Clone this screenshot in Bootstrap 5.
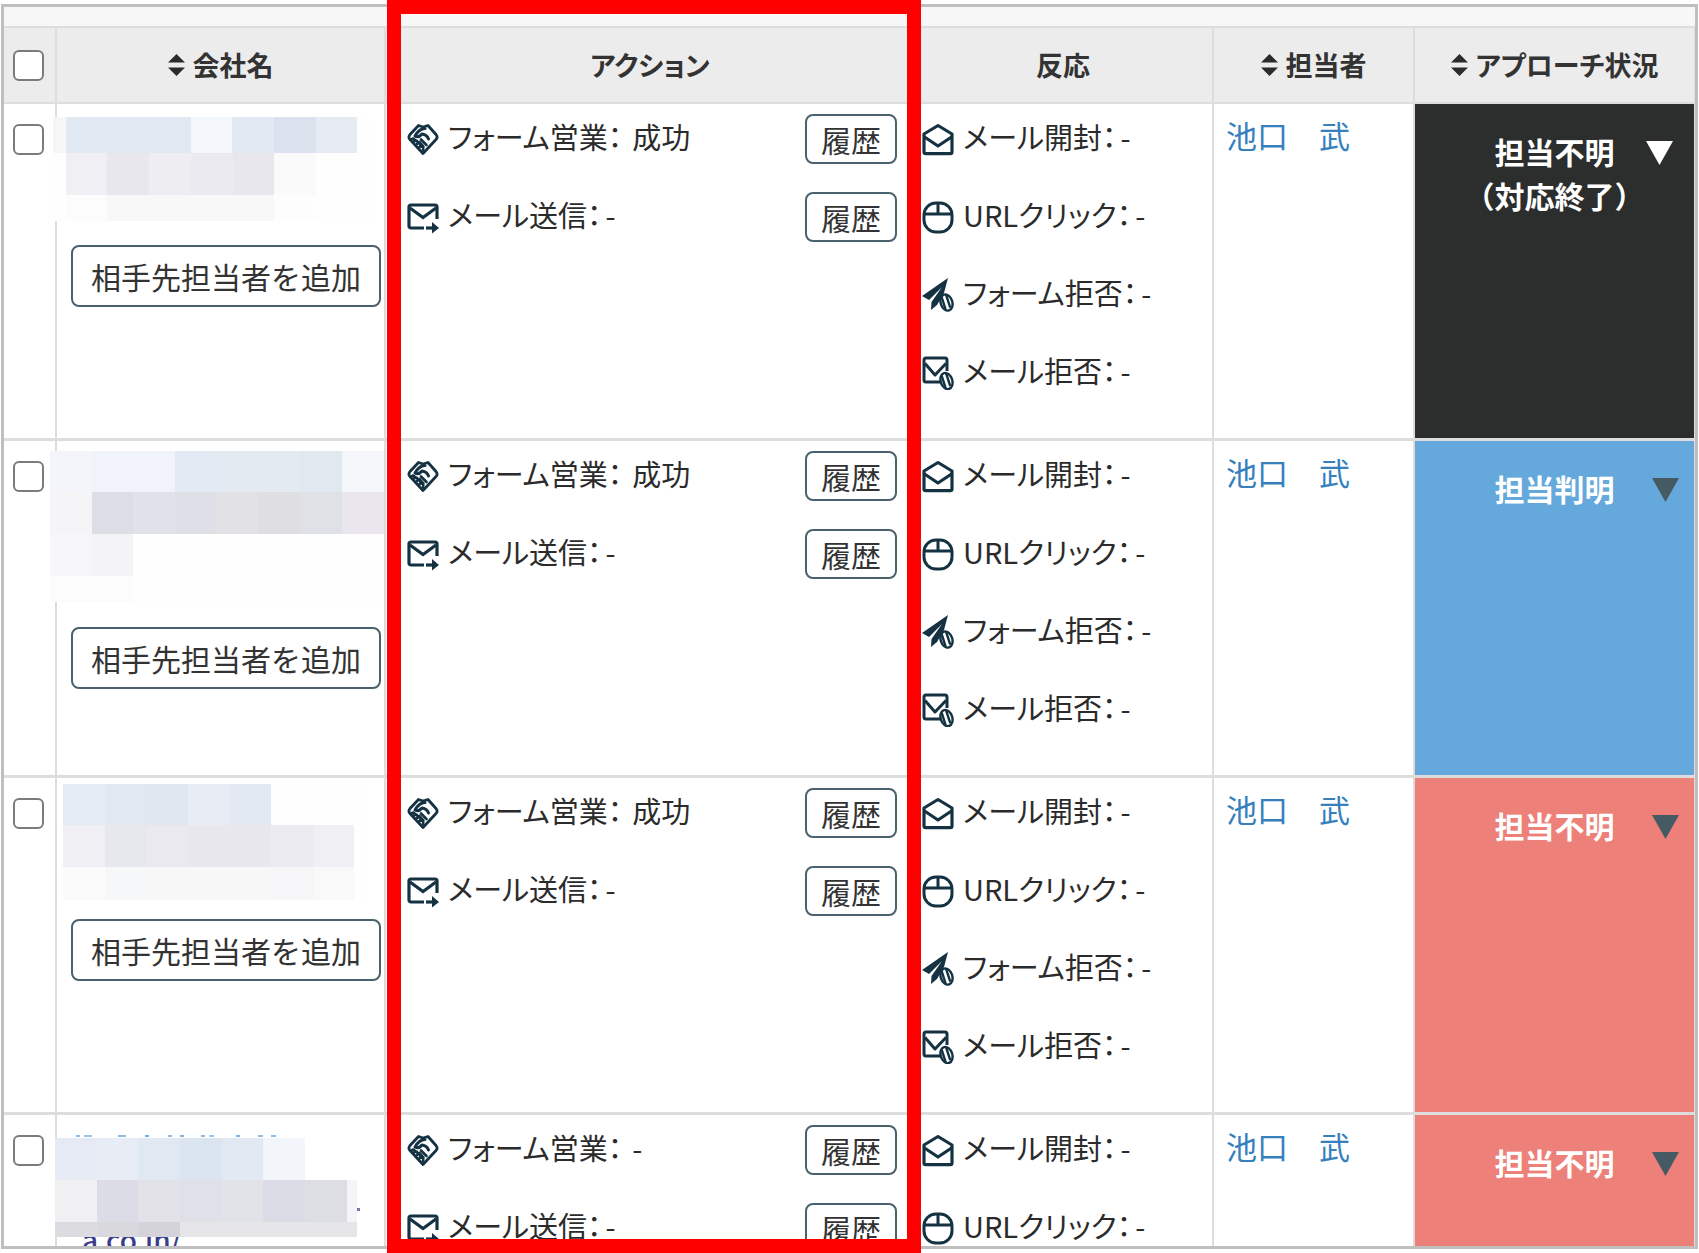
<!DOCTYPE html>
<html lang="ja">
<head>
<meta charset="utf-8">
<meta name="viewport" content="width=device-width, initial-scale=1">
<title>営業リスト</title>
<link href="https://cdn.jsdelivr.net/npm/bootstrap@5.3.0/dist/css/bootstrap.min.css" rel="stylesheet">
<style>
  body { font-family: "Noto Sans CJK JP", sans-serif; font-feature-settings: "palt"; font-size: 29px; line-height: 46px; color: #2b2b2b; overflow: hidden; }
  .stage { height: 100vh; padding: 4px 1px; }
  .list-panel { height: 100%; border: 3px solid #bfbfbf; padding-bottom: 2px; }
  .top-strip { height: 19px; background: #f7f7f7; }
  .sales-list { table-layout: fixed; border-collapse: separate; border-spacing: 0; }
  .sales-list th, .sales-list td { padding: 0; vertical-align: top; border-right: 2px solid #ddd; border-bottom: 3px solid #ddd; }
  .sales-list th { height: 78px; vertical-align: middle; text-align: center; background: #ececec; border-top: 2px solid #ddd; border-bottom-width: 2px; font-size: 27px; line-height: 40px; font-weight: 700; color: #333; }
  .sales-list th:last-child, .sales-list td:last-child { border-right: 1px solid #ddd; }
  .c-check { width: 53px; } .c-company { width: 329px; } .c-react { width: 300px; } .c-staff { width: 201px; } .c-state { width: 280px; }
  .pick { appearance: none; display: block; width: 31px; height: 31px; margin: 20px 0 0 9px; border: 2px solid #7b7b7b; border-radius: 6px; background: #fff; }
  th .pick { margin-top: 0; }
  .sort { width: 17px; height: 22px; fill: #2b2b2b; }
  .mask { display: block; position: relative; z-index: 1; width: 334px; margin-left: -7px; }
  .line-btn { border: 2px solid #4a626d; border-radius: 8px; background: #fff; color: #333; padding: 0; font-size: 30px; }
  .add-btn { width: 310px; height: 62px; margin-left: 14px; line-height: 58px; }
  .log-btn { width: 92px; height: 50px; line-height: 46px; }
  .acts { padding: 10px 17px 40px 21px; gap: 28px; }
  .reacts { padding: 10px 9px 40px 8px; gap: 28px; }
  .entry { height: 50px; gap: 9px; white-space: nowrap; }
  .entry .words { padding-bottom: 6px; }
  .entry .val { margin-left: 4px; }
  .entry .val-form { margin-left: 10px; }
  .ico { width: 32px; height: 34px; flex: none; color: #153243; }
  .staff { display: inline-block; padding: 8px 12px; font-size: 31px; color: #3580bd; text-decoration: none; }
  .state { display: block; width: 100%; padding: 25px 0 0; border: 0; background: none; color: #fff; font-size: 30px; font-weight: 700; line-height: 44px; position: relative; }
  .state .tri { position: absolute; top: 37px; right: 15px; width: 27px; height: 24px; fill: #465a64; }
  .st-end { background: #2c2e2d; } .st-end .tri { right: 21px; fill: #fff; }
  .st-known { background: #64a8dc; } .st-unknown { background: #ed8078; }
  .focus-frame { position: absolute; top: 0; bottom: 0; left: 387px; right: 778px; border: 14px solid #f00; pointer-events: none; z-index: 3; }
</style>
</head>
<body>
<svg class="d-none" xmlns="http://www.w3.org/2000/svg">
  <symbol id="i-sort" viewBox="0 0 17 22"><path d="M8.500 0 17 8.500H0zM0 13.500h17L8.500 22z"/></symbol>
  <symbol id="i-tri" viewBox="0 0 27 24"><path d="M0 0h27L13.500 24z"/></symbol>
  <symbol id="i-hand" viewBox="0 0 32 34"><g fill="none" stroke="currentColor" stroke-linejoin="round" stroke-linecap="round"><path stroke-width="2.800" d="M16 5 11.500 3.500 3 12.500c-1.500 2-1.500 3.500 0 5L16 31.500l13-14c1.500-1.500 1.500-3 0-5L21 3.500z"/><path stroke-width="3" d="M18 6.500c-5 0-8 4-10 7.500 2.500 1.500 5 .5 7-2 3 .5 5.500 2 6.500 5"/><path stroke-width="2.600" d="M4.500 17.500c2-2.500 4 0 2.500 2 3-2 4.500 0 3 2.500 3-2 4.500 0 2.500 3 2.500-1 4.500 0 3.500 3M14 17.500l5.500 5.500M12.500 20l4 4.500"/></g></symbol>
  <symbol id="i-send" viewBox="0 0 32 34"><g fill="none" stroke="currentColor" stroke-width="3.200"><path d="M17 28H4c-1.300 0-2-.7-2-2V7c0-1.300.7-2 2-2h24c1.300 0 2 .7 2 2v12"/><path d="M3 8 16 17.500 29 8"/><path d="M19 28h8"/></g><path d="M25 22 32 28 25 33.500z" fill="currentColor"/></symbol>
  <symbol id="i-open" viewBox="0 0 32 34"><g fill="none" stroke="currentColor" stroke-width="3.200" stroke-linejoin="round"><path d="M2 12 16 3.500 30 12v18c0 1-.6 1.700-1.700 1.700H3.700C2.600 31.700 2 31 2 30z"/><path d="M2.500 15 16 24 29.500 15"/></g></symbol>
  <symbol id="i-mouse" viewBox="0 0 32 34"><g fill="none" stroke="currentColor" stroke-width="3"><rect x="2" y="3" width="28" height="29" rx="12"/><path d="M2 14h28M16 3v11"/></g></symbol>
  <symbol id="i-plane" viewBox="0 0 32 34"><path d="M26 0 0 18l7 4L20 9 9.500 24 9 32l6-5 7-12z" fill="currentColor"/><g fill="#fff" stroke="currentColor" stroke-width="2.400" transform="rotate(-18 24.500 24.500)"><ellipse cx="24.500" cy="24.500" rx="5.800" ry="8.300"/><path d="M21.500 18v13M26.500 16.500v14"/></g></symbol>
  <symbol id="i-block" viewBox="0 0 32 34"><g fill="none" stroke="currentColor" stroke-width="3" stroke-linejoin="round"><path d="M19 26H4c-1.200 0-2-.8-2-2V4c0-1.200.8-2 2-2h19c1.200 0 2 .8 2 2v11"/><path d="M3 7.500 13 19 24 7.500"/></g><g fill="#fff" stroke="currentColor" stroke-width="2.400" transform="rotate(-18 24.500 25)"><ellipse cx="24.500" cy="25" rx="5.800" ry="8.300"/><path d="M21.500 18.500v13M26.500 17v14"/></g></symbol>
</svg>

<div class="stage position-relative">
  <main class="list-panel overflow-hidden bg-white">
    <div class="top-strip"></div>
    <table class="sales-list w-100">
      <colgroup><col class="c-check"><col class="c-company"><col><col class="c-react"><col class="c-staff"><col class="c-state"></colgroup>
      <thead>
        <tr>
          <th scope="col"><input class="pick" type="checkbox" aria-label="すべて選択"></th>
          <th scope="col"><span class="d-inline-flex align-items-center gap-2"><svg class="sort"><use href="#i-sort"/></svg>会社名</span></th>
          <th scope="col" class="border-end-0">アクション</th>
          <th scope="col">反応</th>
          <th scope="col"><span class="d-inline-flex align-items-center gap-2"><svg class="sort"><use href="#i-sort"/></svg>担当者</span></th>
          <th scope="col"><span class="d-inline-flex align-items-center gap-2"><svg class="sort"><use href="#i-sort"/></svg>アプローチ状況</span></th>
        </tr>
      </thead>
      <tbody id="rows"></tbody>
    </table>
  </main>
  <div class="focus-frame"></div>
</div>

<script>
  // Each mask is a mosaic: [x, y, width, height, colour], x from the mask's left edge.
  const rows = [
    { form: '成功', css: 'st-end', state: '担当不明<br>（対応終了）', top: 13, h: 104, gap: 24, cells: [
      [3,0,318,104,'#fefefe'],[3,0,13,36,'#f6f6f6'],[16,0,41,36,'#e1e9f2'],[57,0,84,36,'#e0e8f1'],[141,0,41,36,'#f3f6fb'],[182,0,42,36,'#e1e9f2'],[224,0,42,36,'#dbe2ee'],[266,0,41,36,'#e6eaf3'],
      [16,36,41,42,'#f0eff4'],[57,36,42,42,'#e8e7ed'],[99,36,42,42,'#eeedf2'],[141,36,42,42,'#ebeaf0'],[183,36,41,42,'#e9e7ee'],[224,36,42,42,'#fafafa'],
      [16,78,41,26,'#fcfcfc'],[57,78,167,26,'#f8f8f8'],[224,78,42,26,'#fdfdfd']] },
    { form: '成功', css: 'st-known', state: '担当判明', top: 10, h: 151, gap: 25, cells: [
      [0,0,334,151,'#fefefe'],[0,0,42,41,'#f3f5fa'],[42,0,83,41,'#f0f4fa'],[125,0,42,41,'#e2eaf3'],[167,0,83,41,'#e3eaf2'],[250,0,42,41,'#e0e8f0'],[292,0,42,41,'#f5f6fa'],
      [0,41,42,42,'#f5f5f7'],[42,41,41,42,'#dddde6'],[83,41,42,42,'#e1e1e9'],[125,41,40,42,'#dfdfe8'],[165,41,43,42,'#e2e2e6'],[208,41,42,42,'#dfdfe2'],[250,41,42,42,'#e0e1e6'],[292,41,42,42,'#e9e7ed'],
      [0,83,42,42,'#f7f7f9'],[42,83,41,42,'#f4f4f6'],[0,125,83,26,'#fcfcfc']] },
    { form: '成功', css: 'st-unknown', state: '担当不明', top: 6, h: 116, gap: 19, cells: [
      [13,0,304,116,'#fefefe'],[13,0,42,41,'#e3ebf4'],[55,0,41,41,'#e0e8f2'],[96,0,42,41,'#e0e7f1'],[138,0,42,41,'#e7ecf5'],[180,0,41,41,'#e2e9f2'],
      [13,41,42,42,'#f0eff4'],[55,41,41,42,'#e6e8ed'],[96,41,42,42,'#eae9ef'],[138,41,83,42,'#e8e7ed'],[221,41,42,42,'#ecebf1'],[263,41,41,42,'#f0eff4'],
      [13,83,42,33,'#fbfbfb'],[55,83,41,33,'#f6f7f9'],[96,83,125,33,'#f7f7f7'],[221,83,42,33,'#f6f6f9'],[263,83,41,33,'#f9f9f9']] },
    { form: '-', css: 'st-unknown', state: '担当不明', top: 19, h: 112, gap: 19, site: 'a.co.in/', cells: [
      [26,1,4,2,'#8fbbe0'],[34,1,8,2,'#9fc4e4'],[68,1,8,2,'#8fbbe0'],[95,1,4,2,'#6faedb'],[118,1,4,2,'#8fbbe0'],[130,1,4,2,'#7fb3dd'],[151,1,4,2,'#8fbbe0'],[159,1,5,2,'#9fc4e4'],[186,1,4,2,'#7fb3dd'],[208,1,5,2,'#8fbbe0'],[221,1,5,2,'#8fbbe0'],
      [5,4,42,42,'#e5eaf4'],[47,4,41,42,'#e7ecf5'],[88,4,42,42,'#e0e8f2'],[130,4,42,42,'#dae5ef'],[172,4,41,42,'#e2e9f2'],[213,4,42,42,'#f2f6fa'],
      [5,46,42,42,'#f0f0f3'],[47,46,41,42,'#dcdce6'],[88,46,42,42,'#e2e2e8'],[130,46,42,42,'#e0e0e9'],[172,46,41,42,'#e2e2e9'],[213,46,42,42,'#dcdce6'],[255,46,42,42,'#dddee4'],[297,46,10,42,'#f5f5f9'],[307,74,3,3,'#7777b0'],
      [5,88,42,15,'#dcdce0'],[47,88,41,15,'#d8d8dd'],[88,88,42,15,'#d3d3d9'],[130,88,177,15,'#e6e6e8']] }
  ];
  const entry = (icon, label, val, extra = '', cls = '') =>
    `<div class="entry d-flex align-items-center"><svg class="ico"><use href="#${icon}"/></svg><span class="words">${label}：<span class="val ${cls}">${val}</span></span>${extra}</div>`;
  const log = '<button type="button" class="line-btn log-btn ms-auto">履歴</button>';
  document.getElementById('rows').innerHTML = rows.map(r => `
    <tr>
      <td><input class="pick" type="checkbox" aria-label="行を選択"></td>
      <td><svg class="mask" height="${r.h}" style="margin-top:${r.top}px;margin-bottom:${r.gap}px">${
        r.site ? `<text x="32" y="117" font-size="28" font-weight="500" fill="#3c3c8c">${r.site}</text>` : ''}${
        r.cells.map(c => `<rect x="${c[0]}" y="${c[1]}" width="${c[2]}" height="${c[3]}" fill="${c[4]}"/>`).join('')}</svg>
        <button type="button" class="line-btn add-btn">相手先担当者を追加</button></td>
      <td class="border-end-0"><div class="acts d-flex flex-column">${entry('i-hand', 'フォーム営業', r.form, log, 'val-form')}${entry('i-send', 'メール送信', '-', log)}</div></td>
      <td><div class="reacts d-flex flex-column">${entry('i-open', 'メール開封', '-')}${entry('i-mouse', 'URLクリック', '-')}${entry('i-plane', 'フォーム拒否', '-')}${entry('i-block', 'メール拒否', '-')}</div></td>
      <td><a class="staff" href="#">池口　武</a></td>
      <td class="${r.css}"><button type="button" class="state">${r.state}<svg class="tri"><use href="#i-tri"/></svg></button></td>
    </tr>`).join('');
</script>
<script src="https://cdn.jsdelivr.net/npm/bootstrap@5.3.0/dist/js/bootstrap.bundle.min.js"></script>
</body>
</html>
